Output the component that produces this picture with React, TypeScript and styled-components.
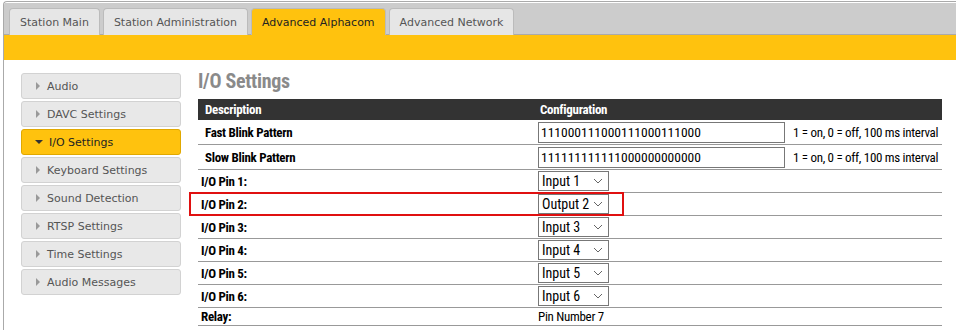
import styled, { createGlobalStyle } from 'styled-components';

const GlobalStyle = createGlobalStyle`
    html, body {
        margin: 0;
        padding: 0;
        background: #fff;
    }
`;

const narrow = `"Roboto Condensed", Roboto, sans-serif`;
const yellow = '#ffc20e';

const tabs = ['Station Main', 'Station Administration', 'Advanced Alphacom', 'Advanced Network'];
const menu = ['Audio', 'DAVC Settings', 'I/O Settings', 'Keyboard Settings', 'Sound Detection', 'RTSP Settings', 'Time Settings', 'Audio Messages'];
const pins = [1, 2, 3, 4, 5, 6];

export default function App() {
  return (
    <>
      <GlobalStyle />
      <Frame>
        <TabBar>
          {tabs.map(t => (
            <Tab key={t} $active={t === 'Advanced Alphacom'}>{t}</Tab>
          ))}
        </TabBar>
        <Band />
        <Content>
          <SideMenu>
            {menu.map(m => (
              <MenuItem key={m} $active={m === 'I/O Settings'}>
                <Arrow $open={m === 'I/O Settings'} />
                {m}
              </MenuItem>
            ))}
          </SideMenu>
          <Main>
            <Heading>I/O Settings</Heading>
            <Table>
              <HeadRow>
                <HeadCell>Description</HeadCell>
                <HeadCell>Configuration</HeadCell>
              </HeadRow>
              <PatternRow>
                <Label $indent={7}>Fast Blink Pattern</Label>
                <ConfigCell>
                  <TextBox defaultValue="111000111000111000111000" />
                  <Hint>1 = on, 0 = off, 100 ms interval</Hint>
                </ConfigCell>
              </PatternRow>
              <PatternRow>
                <Label $indent={7}>Slow Blink Pattern</Label>
                <ConfigCell>
                  <TextBox defaultValue="111111111111000000000000" />
                  <Hint>1 = on, 0 = off, 100 ms interval</Hint>
                </ConfigCell>
              </PatternRow>
              {pins.map(p => (
                <PinRow key={p}>
                  {p === 2 && <Highlight />}
                  <Label $indent={3}>I/O Pin {p}:</Label>
                  <ConfigCell>
                    <Select>
                      <span>{p === 2 ? 'Output 2' : `Input ${p}`}</span>
                      <svg width="10" height="6" viewBox="0 0 10 6">
                        <polyline points="1,1 5,5 9,1" fill="none" stroke="#666" strokeWidth="1" />
                      </svg>
                    </Select>
                  </ConfigCell>
                </PinRow>
              ))}
              <RelayRow>
                <Label $indent={3}>Relay:</Label>
                <ConfigCell>
                  <Plain>Pin Number 7</Plain>
                </ConfigCell>
              </RelayRow>
            </Table>
          </Main>
        </Content>
      </Frame>
    </>
  );
}

const Frame = styled.div`
    margin: 1px 0 0 3px;
    height: 329px;
    border-left: 1px solid #aaa;
    border-top: 1px solid #aaa;
    border-top-left-radius: 4px;
    padding: 1px 0 0 0;
    box-sizing: border-box;
    overflow: hidden;
`;

const TabBar = styled.div`
    display: flex;
    align-items: flex-end;
    gap: 3px;
    height: 32px;
    padding: 0 0 0 5px;
    box-sizing: border-box;
    background: #ccc;
    border-bottom: 1px solid #aaa;
`;

const Tab = styled.div<{ $active?: boolean }>`
    height: 27px;
    margin-bottom: -1px;
    padding: 1px 10px 0;
    display: flex;
    align-items: center;
    border: 1px solid #bbb;
    border-bottom: none;
    border-radius: 4px 4px 0 0;
    background: ${p => (p.$active ? yellow : '#e6e6e6')};
    color: ${p => (p.$active ? '#222' : '#555')};
    font-family: "DejaVu Sans", Verdana, sans-serif;
    font-size: 11px;
    box-sizing: border-box;
`;

const Band = styled.div`
    height: 25px;
    background: ${yellow};
`;

const Content = styled.div`
    display: flex;
    padding: 9px 0 0 17px;
`;

const SideMenu = styled.div`
    display: flex;
    flex-direction: column;
    gap: 2px;
    width: 160px;
    padding-top: 4px;
`;

const MenuItem = styled.div<{ $active?: boolean }>`
    height: 26px;
    box-sizing: border-box;
    display: flex;
    align-items: center;
    padding-left: 13px;
    border: 1px solid ${p => (p.$active ? '#e0a800' : '#d2d2d2')};
    border-radius: 3px;
    background: ${p => (p.$active ? yellow : '#e8e8e8')};
    color: ${p => (p.$active ? '#222' : '#555')};
    font-family: "DejaVu Sans", Verdana, sans-serif;
    font-size: 11px;
`;

const Arrow = styled.span<{ $open?: boolean }>`
    width: 0;
    height: 0;
    margin-right: 7px;
    ${p =>
      p.$open
        ? `border-left: 4px solid transparent; border-right: 4px solid transparent; border-top: 4px solid #333; margin-right: 6px;`
        : `border-top: 4px solid transparent; border-bottom: 4px solid transparent; border-left: 4px solid #999; margin-left: 1px;`}
`;

const Main = styled.div`
    flex: 1;
    margin-left: 17px;
    margin-right: 14px;
`;

const Heading = styled.h1`
    margin: 0;
    height: 30px;
    font-family: ${narrow};
    font-stretch: 80%;
    font-weight: bold;
    font-size: 20px;
    line-height: 24px;
    letter-spacing: -0.3px;
    color: #8a8a8a;
`;

const Table = styled.div`
    width: 744px;
`;

const Row = styled.div`
    position: relative;
    display: grid;
    grid-template-columns: 335px 1fr;
    align-items: center;
    border-bottom: 1px solid #999;
    box-sizing: border-box;
    font-family: ${narrow};
    font-stretch: 80%;
    color: #000;
    white-space: nowrap;
    letter-spacing: -0.3px;
`;

const HeadRow = styled(Row)`
    height: 21px;
    background: #333;
    border-bottom: none;
`;

const HeadCell = styled.div`
    padding-left: 7px;
    color: #fff;
    font-weight: bold;
    font-size: 13px;
`;

const PatternRow = styled(Row)`
    height: 25px;
`;

const PinRow = styled(Row)`
    height: 23px;
`;

const RelayRow = styled(Row)`
    height: 18px;
`;

const Label = styled.div<{ $indent: number }>`
    padding-left: ${p => p.$indent}px;
    font-weight: bold;
    font-size: 13px;
`;

const ConfigCell = styled.div`
    display: flex;
    align-items: center;
    padding-left: 5px;
`;

const TextBox = styled.input`
    width: 247px;
    height: 21px;
    box-sizing: border-box;
    border: 1px solid #777;
    padding: 0 2px;
    font-family: ${narrow};
    font-stretch: 80%;
    font-size: 13.5px;
    color: #000;
    outline: none;
`;

const Hint = styled.span`
    margin-left: 8px;
    font-size: 13px;
`;

const Select = styled.div`
    width: 71px;
    height: 20px;
    box-sizing: border-box;
    border: 1px solid #777;
    display: flex;
    align-items: center;
    justify-content: space-between;
    padding: 0 5px 0 3px;
    font-size: 14px;
    letter-spacing: 0;
    background: #fff;
`;

const Plain = styled.span`
    font-size: 13px;
`;

const Highlight = styled.div`
    position: absolute;
    left: -9px;
    top: -1px;
    width: 435px;
    height: 24px;
    border: 2px solid #e01010;
    box-sizing: border-box;
    pointer-events: none;
`;
